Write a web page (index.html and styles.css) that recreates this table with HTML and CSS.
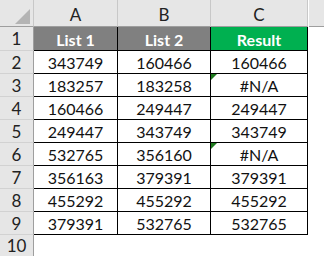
FILE: index.html
```html
<!DOCTYPE html>
<html>
<head>
<meta charset="utf-8">
<link rel="stylesheet" href="styles.css">
</head>
<body>
<div class="sheet">
  <div class="corner"><span class="tri"></span></div>
  <div class="ch">A</div>
  <div class="ch">B</div>
  <div class="ch">C</div>
  <div class="ch last"></div>

  <div class="rh">1</div>
  <div class="c hd">List 1</div>
  <div class="c hd">List 2</div>
  <div class="c hd green">Result</div>
  <div class="e"></div>

  <div class="rh">2</div>
  <div class="c">343749</div><div class="c">160466</div><div class="c">160466</div><div class="e"></div>
  <div class="rh">3</div>
  <div class="c">183257</div><div class="c">183258</div><div class="c err">#N/A</div><div class="e"></div>
  <div class="rh">4</div>
  <div class="c">160466</div><div class="c">249447</div><div class="c">249447</div><div class="e"></div>
  <div class="rh">5</div>
  <div class="c">249447</div><div class="c">343749</div><div class="c">343749</div><div class="e"></div>
  <div class="rh">6</div>
  <div class="c">532765</div><div class="c">356160</div><div class="c err">#N/A</div><div class="e"></div>
  <div class="rh">7</div>
  <div class="c">356163</div><div class="c">379391</div><div class="c">379391</div><div class="e"></div>
  <div class="rh">8</div>
  <div class="c">455292</div><div class="c">455292</div><div class="c">455292</div><div class="e"></div>
  <div class="rh">9</div>
  <div class="c">379391</div><div class="c">532765</div><div class="c">532765</div><div class="e"></div>
  <div class="rh">10</div>
  <div class="e"></div><div class="e"></div><div class="e"></div><div class="e"></div>
</div>
</body>
</html>
```

FILE: styles.css
```css
html, body {
  margin: 0;
  padding: 0;
  background: #ffffff;
}
.sheet {
  width: 324px;
  height: 256px;
  overflow: hidden;
  display: grid;
  grid-template-columns: 34px 84px 93px 97px 1fr;
  grid-template-rows: 27px 24px repeat(8, 23px) 1fr;
  font-family: Lato, "Open Sans", sans-serif;
  font-size: 16px;
  color: #111;
}
.sheet > div {
  box-sizing: border-box;
  display: flex;
  align-items: center;
  justify-content: center;
}
.corner {
  background: #e6e6e6;
  border-right: 1px solid #c8c8c8;
  border-bottom: 1px solid #9e9e9e;
  position: relative;
}
.tri {
  position: absolute;
  left: 15px;
  top: 9px;
  width: 15px;
  height: 15px;
  background: #b4b4b4;
  clip-path: polygon(100% 0, 100% 100%, 0 100%);
}
.ch {
  background: #e6e6e6;
  border-right: 1px solid #c8c8c8;
  border-bottom: 1px solid #9e9e9e;
  color: #222;
  padding-top: 2px;
  font-size: 17px;
}
.ch.last {
  border-right: none;
  margin-left: 1px;
}
.rh {
  background: #e6e6e6;
  border-right: 1px solid #9e9e9e;
  border-bottom: 1px solid #d2d2d2;
  color: #222;
  font-size: 17px;
}
.c {
  border-right: 1px solid #000;
  border-bottom: 1px solid #000;
  position: relative;
  padding-top: 1px;
}
.hd {
  background: #808080;
  color: #ffffff;
  font-weight: bold;
}
.hd.green {
  background: #00b050;
}
.err::before {
  content: "";
  position: absolute;
  left: 0;
  top: 0;
  width: 6px;
  height: 6px;
  background: #1e7a1e;
  clip-path: polygon(0 0, 100% 0, 0 100%);
}
.e {
  background: #ffffff;
}
```
